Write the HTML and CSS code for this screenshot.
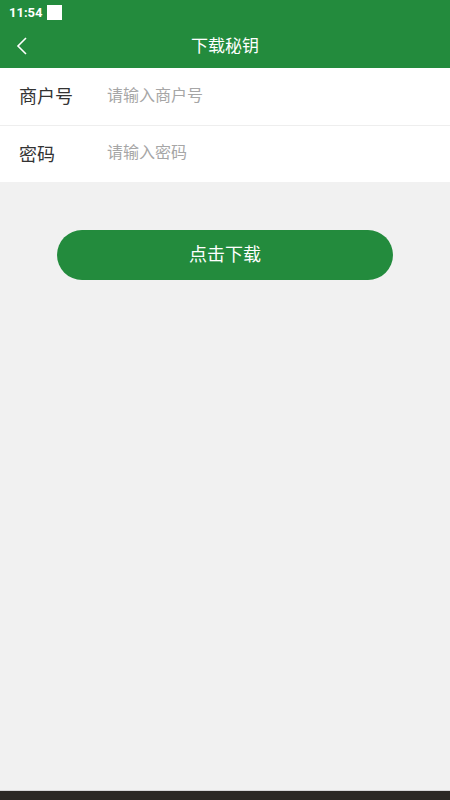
FILE: index.html
```html
<!DOCTYPE html>
<html lang="zh">
<head>
<meta charset="utf-8">
<title>下载秘钥</title>
<link rel="stylesheet" href="styles.css">
</head>
<body>
<div class="screen">
  <div class="statusbar">
    <span class="time">11:54</span>
    <span class="sq"></span>
  </div>
  <div class="toolbar">
    <svg class="back" width="14" height="20" viewBox="0 0 14 20"><path d="M11 2 L3 10 L11 18" fill="none" stroke="#fff" stroke-width="1.6"/></svg>
    <span class="title">下载秘钥</span>
  </div>
  <div class="form">
    <div class="row">
      <span class="label">商户号</span>
      <input class="input" type="text" placeholder="请输入商户号">
    </div>
    <div class="row">
      <span class="label">密码</span>
      <input class="input" type="password" placeholder="请输入密码">
    </div>
  </div>
  <div class="actions">
    <button class="btn">点击下载</button>
  </div>
  <div class="navbar"></div>
</div>
</body>
</html>
```
FILE: styles.css
```css
* { box-sizing: border-box; }
html, body { margin: 0; padding: 0; }
body {
  font-family: Roboto, "Noto Sans CJK SC", "Noto Sans", sans-serif;
  background: #f1f1f1;
}
.screen {
  width: 450px;
  height: 800px;
  display: flex;
  flex-direction: column;
  background: #f1f1f1;
}
.statusbar {
  height: 24px;
  background: #238b3d;
  display: flex;
  align-items: center;
  padding-left: 9px;
  gap: 4px;
}
.time {
  color: #fff;
  font-size: 13px;
  font-weight: 700;
  line-height: 1;
}
.sq {
  width: 15px;
  height: 15px;
  background: #fff;
}
.toolbar {
  height: 44px;
  background: #238b3d;
  position: relative;
  display: flex;
  align-items: center;
  justify-content: center;
  padding-bottom: 4px;
}
.back {
  position: absolute;
  left: 15px;
  top: 12px;
}
.title {
  color: #fff;
  font-size: 17px;
  font-weight: 400;
}
.form {
  background: #fff;
}
.row {
  height: 57px;
  display: flex;
  align-items: center;
  padding-left: 19px;
  padding-bottom: 3px;
}
.row + .row {
  border-top: 1px solid #eeeeee;
}
.label {
  width: 88px;
  font-size: 18px;
  color: #333;
  font-weight: 400;
}
.input {
  flex: 1;
  border: 0;
  outline: 0;
  font-family: inherit;
  font-size: 16px;
  color: #333;
  background: transparent;
  padding: 0;
}
.input::placeholder { color: #a6a6a6; }
.actions {
  padding: 48px 57px 0;
}
.btn {
  width: 100%;
  height: 50px;
  border: 0;
  border-radius: 25px;
  background: #238b3d;
  color: #fff;
  font-family: inherit;
  font-size: 18px;
  font-weight: 400;
  padding: 0 0 4px;
}
.navbar {
  margin-top: auto;
  height: 10px;
  border-top: 1px solid #d6d6d6;
  background: #2b2824;
}
```
